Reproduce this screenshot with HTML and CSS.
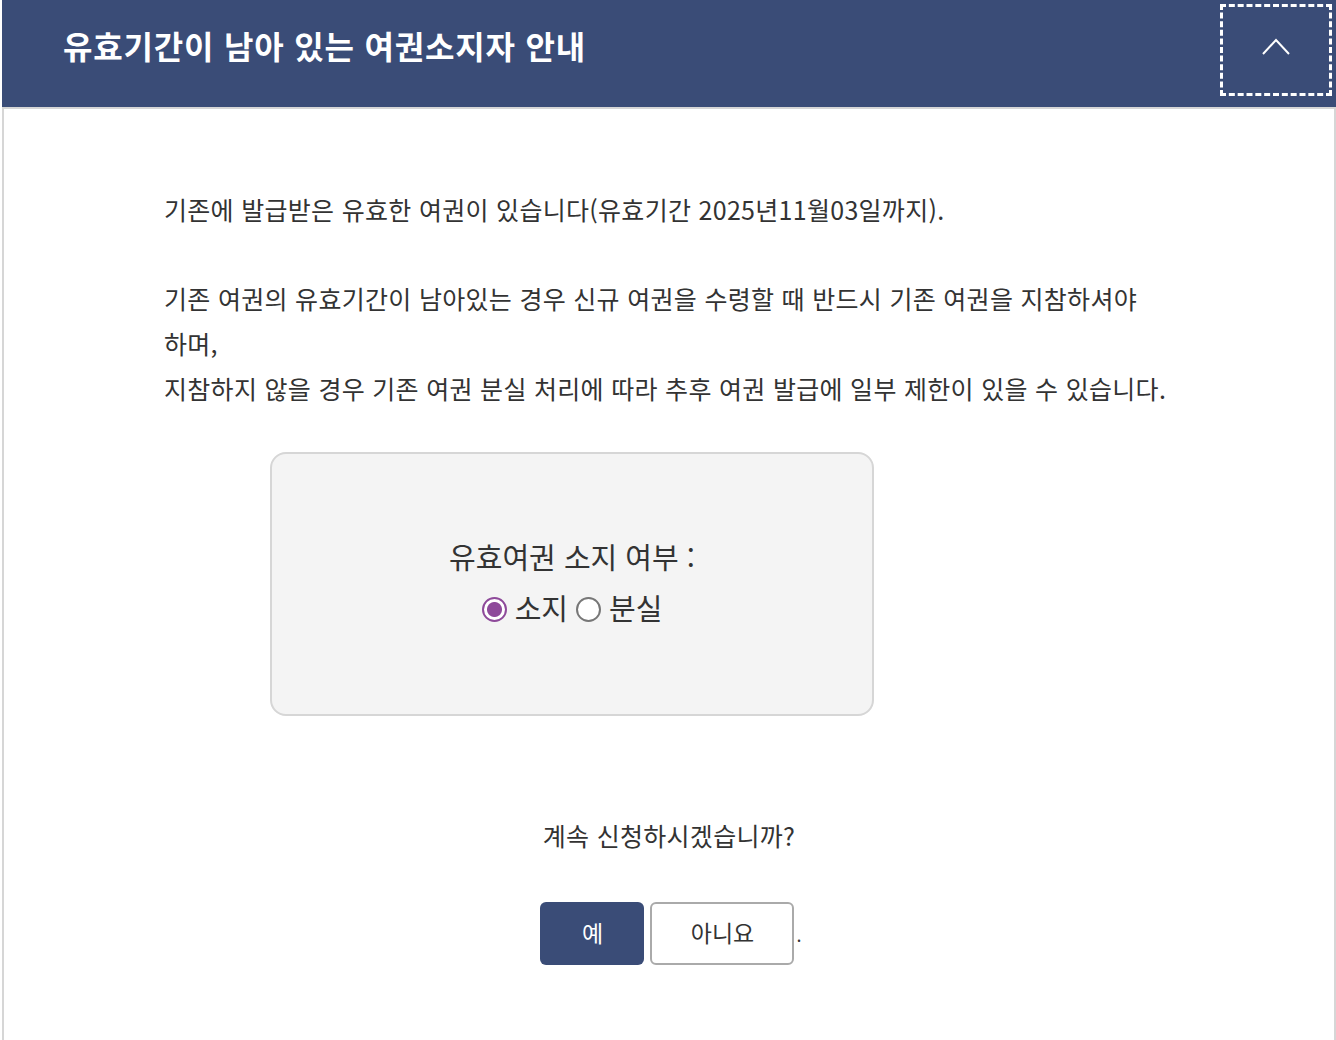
FILE: index.html
```html
<!DOCTYPE html>
<html lang="ko">
<head>
  <meta charset="UTF-8">
  <meta name="viewport" content="width=device-width, initial-scale=1.0">
  <title>유효기간이 남아 있는 여권소지자 안내</title>
  <link rel="stylesheet" href="styles.css">
</head>
<body>

  <div class="panel">
    <div class="panel-head">
      <h2 class="panel-title">유효기간이 남아 있는 여권소지자 안내</h2>
      <button class="toggle-btn" type="button" aria-label="접기">
        <svg width="30" height="18" viewBox="0 0 30 18">
          <polyline points="2,16 15,2 28,16" fill="none" stroke="#fff" stroke-width="2"/>
        </svg>
      </button>
    </div>

    <div class="panel-body">
      <p class="info">기존에 발급받은 유효한 여권이 있습니다(유효기간 2025년11월03일까지).</p>
      <p class="info">기존 여권의 유효기간이 남아있는 경우 신규 여권을 수령할 때 반드시 기존 여권을 지참하셔야<br>하며,<br>지참하지 않을 경우 기존 여권 분실 처리에 따라 추후 여권 발급에 일부 제한이 있을 수 있습니다.</p>

      <div class="check-box">
        <div class="check-label">유효여권 소지 여부 :</div>
        <div class="radio-row">
          <label class="radio"><input type="radio" name="hold" value="Y" checked>소지</label>
          <label class="radio"><input type="radio" name="hold" value="N">분실</label>
        </div>
      </div>

      <p class="question">계속 신청하시겠습니까?</p>

      <div class="btn-row">
        <button class="btn btn-primary" type="button">예</button>
        <button class="btn btn-line" type="button">아니요</button>
        <span class="dot">.</span>
      </div>
    </div>
  </div>

</body>
</html>
```

FILE: styles.css
```css
body {
  margin: 0;
  padding: 0;
  background-color: #fff;
  color: #333;
  font-family: "Noto Sans CJK KR", "Noto Sans", sans-serif;
}

.panel {
  margin-left: 2px;
}

.panel-head {
  background-color: #3a4c77;
  height: 107px;
  display: flex;
  align-items: center;
  justify-content: space-between;
  padding: 0 4px 0 61px;
}

.panel-title {
  margin: 0;
  color: #fff;
  font-size: 32px;
  font-weight: bold;
  letter-spacing: 0.8px;
  padding-bottom: 18px;
}

.toggle-btn {
  width: 112px;
  height: 92px;
  margin-bottom: 7px;
  background: transparent;
  border: 3px dashed #fff;
  display: flex;
  align-items: center;
  justify-content: center;
  cursor: pointer;
  padding: 0 0 6px 0;
}

.panel-body {
  border: 2px solid #d6d6d6;
  border-bottom: none;
  padding: 78px 0 74px 160px;
  min-height: 780px;
}

.info {
  margin: 0;
  font-size: 25px;
  line-height: 45px;
  letter-spacing: 0.3px;
}

.info + .info {
  margin-top: 44px;
}

.check-box {
  box-sizing: border-box;
  width: 604px;
  height: 264px;
  margin: 41px 0 0 106px;
  background-color: #f4f4f4;
  border: 2px solid #d6d6d6;
  border-radius: 16px;
  display: flex;
  flex-direction: column;
  align-items: center;
  justify-content: center;
  padding-bottom: 4px;
}

.check-label {
  font-size: 29px;
  letter-spacing: 0;
  line-height: 51px;
}

.radio-row {
  display: flex;
  align-items: center;
  font-size: 29px;
  letter-spacing: 0;
  line-height: 51px;
  gap: 8px;
}

.radio {
  display: flex;
  align-items: center;
  cursor: pointer;
}

.radio input {
  appearance: none;
  width: 25px;
  height: 25px;
  margin: 4px 8px 0 0;
  border: 2px solid #777;
  border-radius: 50%;
  background-color: #fff;
}

.radio input:checked {
  border-color: #8e4a9a;
  background: radial-gradient(circle, #8e4a9a 0 7px, #fff 8px);
}

.question {
  margin: 101px 0 0 -160px;
  text-align: center;
  font-size: 25px;
  letter-spacing: 0.3px;
}

.btn-row {
  margin: 49px 0 0 -160px;
  padding-left: 4px;
  display: flex;
  justify-content: center;
  align-items: baseline;
  gap: 6px;
  font-size: 18px;
}

.btn {
  height: 63px;
  padding-bottom: 4px;
  font-family: inherit;
  font-size: 23px;
  border-radius: 6px;
  cursor: pointer;
}

.btn-primary {
  width: 104px;
  color: #fff;
  background-color: #3a4c77;
  border: none;
}

.btn-line {
  width: 144px;
  color: #333;
  background-color: #fff;
  border: 2px solid #aaa;
}

.dot {
  margin-left: -4px;
}
```
